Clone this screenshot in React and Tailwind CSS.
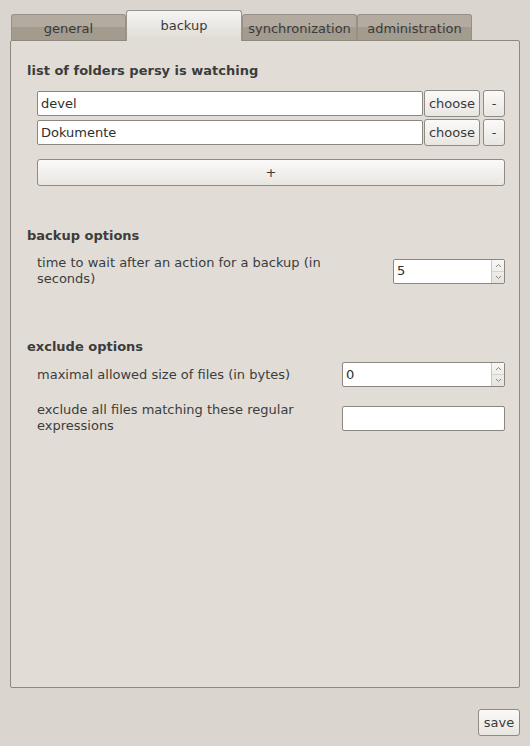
import React from "react";

const tabs = ["general", "backup", "synchronization", "administration"];

function Tab({ label, active }) {
  if (active) {
    return (
      <div className="w-[116px] h-[31px] -mb-px relative z-10 border border-b-0 border-[#9a958b] rounded-t-[3px] bg-[linear-gradient(#f6f5f3,#dfdbd4)] flex justify-center pt-[5px] text-[13px] text-[#3a3a3a]">
        {label}
      </div>
    );
  }
  return (
    <div className="w-[115px] h-[26px] border border-b-0 border-[#978f83] rounded-t-[3px] bg-[linear-gradient(#b3ab9f_50%,#a39b8e_50%)] flex justify-center pt-[4px] text-[13px] text-[#3a3a3a]">
      {label}
    </div>
  );
}

function Button({ children, className }) {
  return (
    <button className={"border border-[#8e8a84] rounded-[3px] bg-[linear-gradient(#fbfaf9,#e9e6e1)] text-[13px] text-[#3a3a3a] flex items-center justify-center " + className}>
      {children}
    </button>
  );
}

function Entry({ value, className }) {
  return (
    <div className={"h-[25px] border border-[#8b8780] rounded-[2px] bg-white px-[3px] flex items-center text-[13px] text-[#2e2e2e] " + className}>
      {value}
    </div>
  );
}

function Spin({ value, className }) {
  return (
    <div className={"h-[25px] border border-[#8b8780] rounded-[2px] bg-white flex " + className}>
      <div className="flex-1 px-[3px] flex items-center text-[13px] text-[#2e2e2e]">{value}</div>
      <div className="w-[13px] border-l border-[#c9c5bf] bg-[linear-gradient(#f8f7f5,#e6e3de)] flex flex-col">
        <div className="flex-1 flex items-center justify-center border-b border-[#d6d2cc]">
          <svg width="7" height="5" viewBox="0 0 7 5"><path d="M1 4L3.5 1.5L6 4" fill="none" stroke="#8a867f" strokeWidth="1" /></svg>
        </div>
        <div className="flex-1 flex items-center justify-center">
          <svg width="7" height="5" viewBox="0 0 7 5"><path d="M1 1L3.5 3.5L6 1" fill="none" stroke="#8a867f" strokeWidth="1" /></svg>
        </div>
      </div>
    </div>
  );
}

export default function App() {
  const folders = ["devel", "Dokumente"];

  return (
    <div className="w-[530px] h-[746px] bg-[#dad6cf] font-['DejaVu_Sans',sans-serif] text-[#3c3c3c] flex flex-col pt-[10px] pl-[10px]">
      <div className="flex items-end h-[30px] pl-[1px]">
        {tabs.map((t) => (
          <Tab key={t} label={t} active={t === "backup"} />
        ))}
      </div>
      <div className="w-[510px] h-[648px] border border-[#8d897f] rounded-[2px] bg-[#e1ddd6] flex flex-col">
        <div className="ml-[16px] mt-[22px] h-[16px] leading-[16px] text-[13px] font-bold">
          list of folders persy is watching
        </div>
        <div className="ml-[26px] w-[468px] mt-[11px] flex flex-col gap-[2px]">
          {folders.map((f) => (
            <div key={f} className="flex items-center h-[27px]">
              <Entry value={f} className="flex-1 h-[25px]" />
              <Button className="w-[56px] h-[27px] ml-[1px]">choose</Button>
              <Button className="w-[22px] h-[27px] ml-[3px]">-</Button>
            </div>
          ))}
          <Button className="h-[27px] mt-[11px] w-full">+</Button>
        </div>

        <div className="ml-[16px] mt-[42px] h-[16px] leading-[16px] text-[13px] font-bold">
          backup options
        </div>
        <div className="ml-[26px] w-[468px] mt-[11px] flex items-center">
          <div className="w-[300px] text-[13px] leading-[16px]">
            time to wait after an action for a backup (in seconds)
          </div>
          <Spin value="5" className="ml-auto w-[112px]" />
        </div>

        <div className="ml-[16px] mt-[52px] h-[16px] leading-[16px] text-[13px] font-bold">
          exclude options
        </div>
        <div className="ml-[26px] w-[468px] mt-[7px] flex items-center">
          <div className="text-[13px] leading-[16px]">maximal allowed size of files (in bytes)</div>
          <Spin value="0" className="ml-auto w-[163px]" />
        </div>
        <div className="ml-[26px] w-[468px] mt-[15px] flex items-center">
          <div className="w-[290px] text-[13px] leading-[16px]">
            exclude all files matching these regular expressions
          </div>
          <Entry value="" className="ml-auto w-[163px]" />
        </div>
      </div>
      <div className="w-[510px] flex justify-end mt-[21px]">
        <Button className="w-[42px] h-[27px]">save</Button>
      </div>
    </div>
  );
}
